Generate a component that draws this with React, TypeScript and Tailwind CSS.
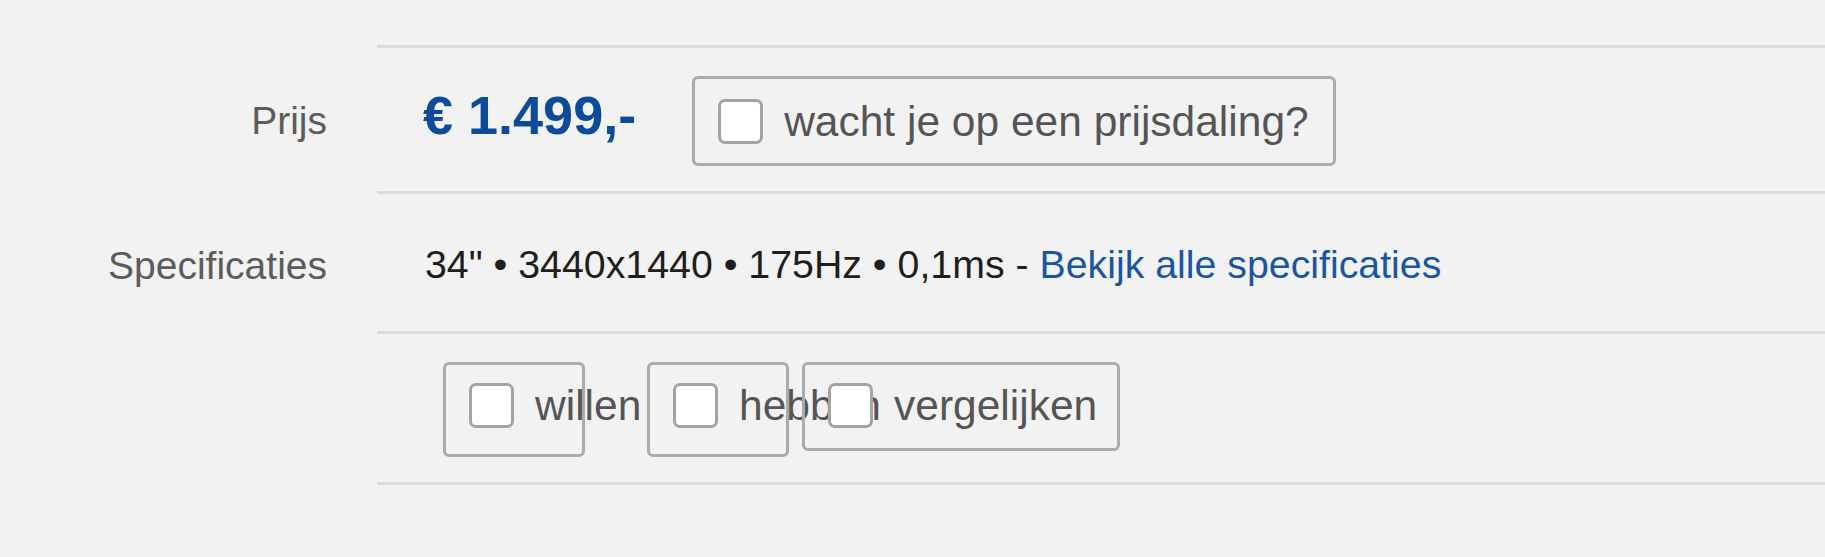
import React from 'react';

const font = { fontFamily: '"Liberation Sans", Arial, sans-serif' };

const Checkbox: React.FC = () => (
  <span className="block w-[45px] h-[45px] shrink-0 bg-white border-[3px] border-[#a3a3a3] rounded-[7px]" />
);

const OptionBox: React.FC<{ label: string; className: string }> = ({ label, className }) => (
  <label
    className={`flex items-start shrink-0 border-[3px] border-[#ababab] rounded-[6px] pl-[23px] pt-[18px] overflow-visible ${className}`}
  >
    <Checkbox />
    <span className="ml-[21px] whitespace-nowrap text-[42.5px] leading-[45px] text-[#555555]">{label}</span>
  </label>
);

const App: React.FC = () => {
  return (
    <div className="w-full h-[557px] bg-[#f2f2f2] pt-[45px]" style={font}>
      {/* Prijs */}
      <div className="flex h-[146px]">
        <div className="w-[327px] shrink-0 text-right text-[39px] leading-none text-[#5c5c5c] pt-[56px]">Prijs</div>
        <div className="ml-[50px] flex-1 flex items-start border-t-[3px] border-[#dcdcdc]">
          <div className="ml-[46px] mt-[40px] text-[54px] leading-none font-bold text-[#0c4a9c] whitespace-nowrap">
            € 1.499,-
          </div>
          <OptionBox label="wacht je op een prijsdaling?" className="ml-[56px] mt-[28px] w-[644px] h-[90px] pt-[20px]" />
        </div>
      </div>

      {/* Specificaties */}
      <div className="flex h-[140px]">
        <div className="w-[327px] shrink-0 text-right text-[39px] leading-none text-[#5c5c5c] pt-[55px]">Specificaties</div>
        <div className="ml-[50px] flex-1 border-t-[3px] border-[#dcdcdc] pl-[48px] pt-[51px] text-[39.3px] leading-none text-[#1e1e1e] whitespace-nowrap">
          34" • 3440x1440 • 175Hz • 0,1ms - <a className="text-[#1a55a3]">Bekijk alle specificaties</a>
        </div>
      </div>

      {/* Acties */}
      <div className="flex h-[151px]">
        <div className="w-[327px] shrink-0" />
        <div className="ml-[50px] flex-1 flex items-start border-t-[3px] border-[#dcdcdc] border-b-[3px] h-[154px]">
          <OptionBox label="willen" className="ml-[66px] mt-[28px] w-[142px] h-[95px]" />
          <OptionBox label="hebben" className="ml-[62px] mt-[28px] w-[142px] h-[95px]" />
          <OptionBox label="vergelijken" className="ml-[13px] mt-[28px] w-[318px] h-[89px]" />
        </div>
      </div>
    </div>
  );
};

export default App;
